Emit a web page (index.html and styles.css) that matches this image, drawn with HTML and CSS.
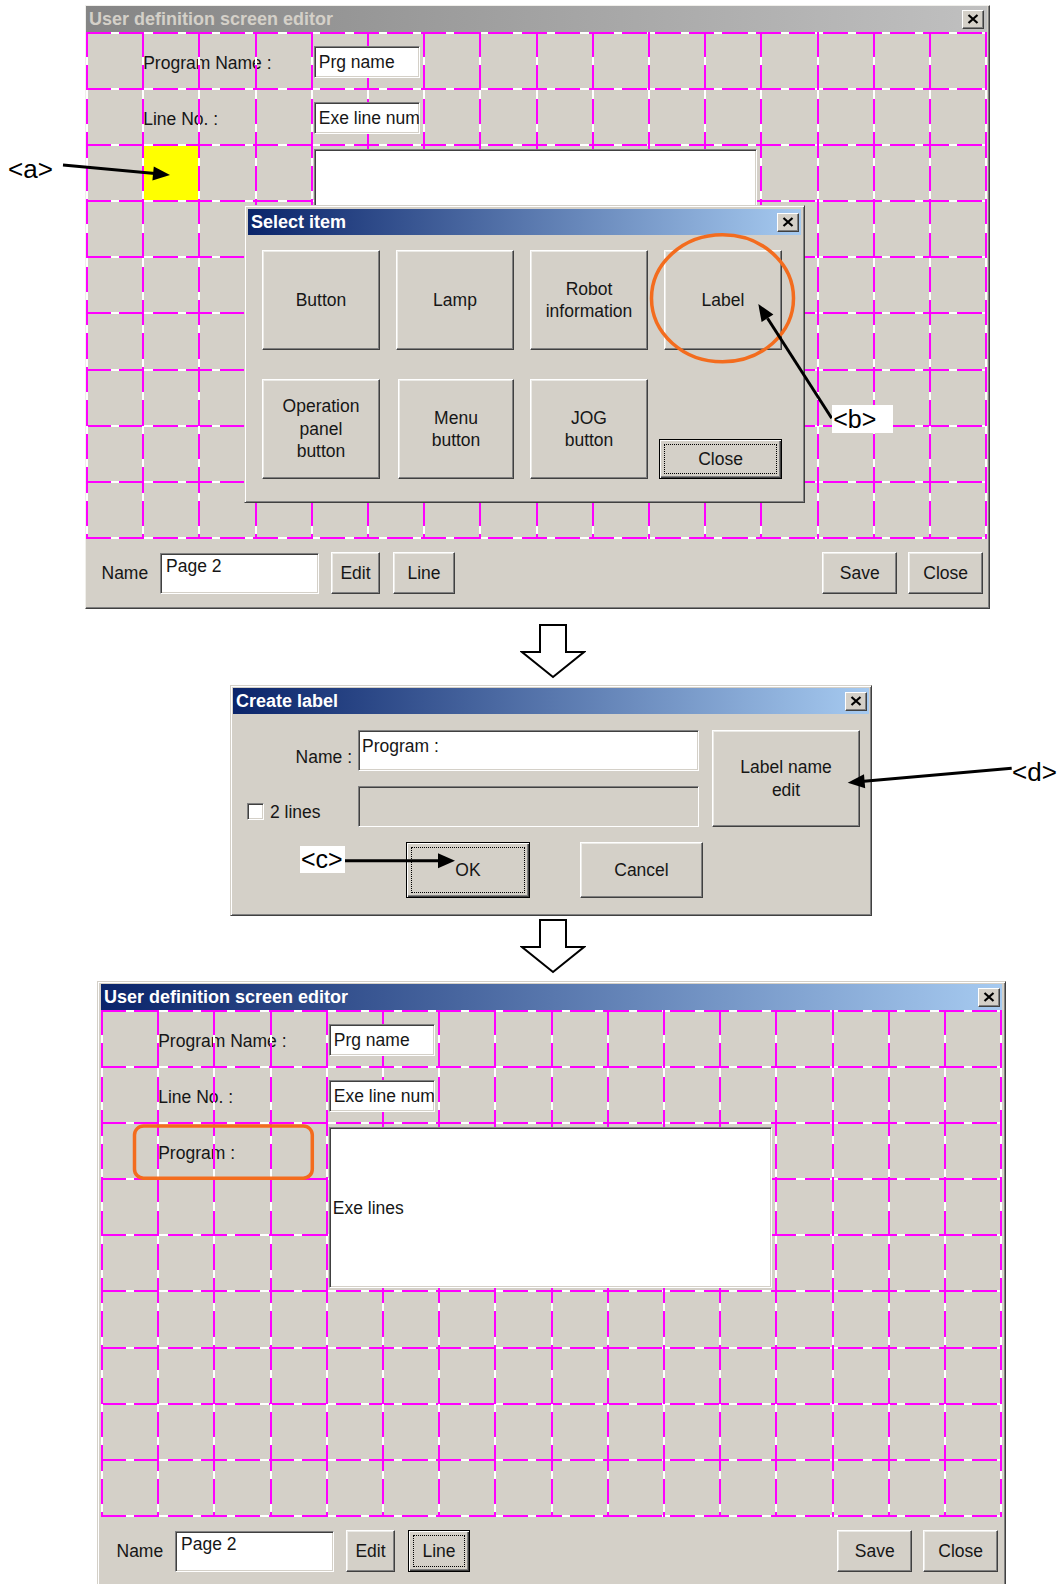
FILE: index.html
```html
<!DOCTYPE html>
<html lang="en">
<head>
<meta charset="utf-8">
<title>User definition screen editor</title>
<link rel="stylesheet" href="styles.css">
</head>
<body>

<div class="win win-top">
  <div class="titlebar inactive">
    <span class="title-text">User definition screen editor</span>
    <span class="tb-close"><svg width="12" height="10" viewBox="0 0 12 10"><path d="M1.5 1L10.5 9M10.5 1L1.5 9" stroke="#000" stroke-width="2.2"/></svg></span>
  </div>
  <div class="canvas">
    <div class="c-lbl r1">Program Name :</div>
    <div class="c-field sunken r1">Prg name</div>
    <div class="c-lbl r2">Line No. :</div>
    <div class="c-field sunken r2">Exe line num</div>
    <div class="c-yellow"></div>
    <div class="c-memo sunken"></div>
  </div>
  <div class="bar">
    <span class="bar-lbl">Name</span>
    <div class="bar-field sunken">Page 2</div>
    <button class="btn b-edit">Edit</button>
    <button class="btn b-line">Line</button>
    <button class="btn b-save">Save</button>
    <button class="btn b-close">Close</button>
  </div>

  <div class="dlg dlg-select">
    <div class="titlebar active">
      <span class="title-text">Select item</span>
      <span class="tb-close"><svg width="12" height="10" viewBox="0 0 12 10"><path d="M1.5 1L10.5 9M10.5 1L1.5 9" stroke="#000" stroke-width="2.2"/></svg></span>
    </div>
    <div class="sel-grid">
      <button class="btn">Button</button>
      <button class="btn">Lamp</button>
      <button class="btn">Robot<br>information</button>
      <button class="btn">Label</button>
      <button class="btn">Operation<br>panel<br>button</button>
      <button class="btn sel-menu">Menu<br>button</button>
      <button class="btn">JOG<br>button</button>
      <button class="btn default sel-close">Close</button>
    </div>
  </div>
</div>

<svg class="down-arrow" width="66" height="56" viewBox="0 0 66 56"><polygon points="20,1 46,1 46,28 64,28 33,53 2,28 20,28" fill="#fff" stroke="#000" stroke-width="2"/></svg>

<div class="dlg dlg-create">
  <div class="titlebar active">
    <span class="title-text">Create label</span>
    <span class="tb-close"><svg width="12" height="10" viewBox="0 0 12 10"><path d="M1.5 1L10.5 9M10.5 1L1.5 9" stroke="#000" stroke-width="2.2"/></svg></span>
  </div>
  <div class="cl-body">
    <div class="cl-name-lbl">Name :</div>
    <div class="cl-name sunken">Program :</div>
    <button class="btn cl-edit">Label name<br>edit</button>
    <div class="cl-check"><span class="checkbox sunken"></span><span>2 lines</span></div>
    <div class="cl-second sunken"></div>
    <div class="cl-actions">
      <button class="btn default cl-ok">OK</button>
      <button class="btn cl-cancel">Cancel</button>
    </div>
  </div>
</div>

<svg class="down-arrow" width="66" height="56" viewBox="0 0 66 56"><polygon points="20,1 46,1 46,28 64,28 33,53 2,28 20,28" fill="#fff" stroke="#000" stroke-width="2"/></svg>

<div class="win win-bottom">
  <div class="titlebar active">
    <span class="title-text">User definition screen editor</span>
    <span class="tb-close"><svg width="12" height="10" viewBox="0 0 12 10"><path d="M1.5 1L10.5 9M10.5 1L1.5 9" stroke="#000" stroke-width="2.2"/></svg></span>
  </div>
  <div class="canvas">
    <div class="c-lbl r1">Program Name :</div>
    <div class="c-field sunken r1">Prg name</div>
    <div class="c-lbl r2">Line No. :</div>
    <div class="c-field sunken r2">Exe line num</div>
    <div class="c-lbl r3">Program :</div>
    <div class="c-memo sunken">Exe lines</div>
  </div>
  <div class="bar">
    <span class="bar-lbl">Name</span>
    <div class="bar-field sunken">Page 2</div>
    <button class="btn b-edit">Edit</button>
    <button class="btn default b-line">Line</button>
    <button class="btn b-save">Save</button>
    <button class="btn b-close">Close</button>
  </div>
</div>

<svg class="overlay" width="1061" height="1584" viewBox="0 0 1061 1584">
  <ellipse cx="722.5" cy="298.3" rx="71" ry="63.5" fill="none" stroke="#f36c1e" stroke-width="3.5"/>
  <rect x="134.5" y="1126" width="177.8" height="52.2" rx="9" fill="none" stroke="#f36c1e" stroke-width="3.5"/>
  <g stroke="#000" stroke-width="3" fill="none">
    <line x1="63" y1="165" x2="155" y2="173.6"/>
    <line x1="831.7" y1="418.3" x2="767.5" y2="318.3"/>
    <line x1="345" y1="860.7" x2="440" y2="860.7"/>
    <line x1="1011.7" y1="768.3" x2="864" y2="781.2"/>
  </g>
  <g fill="#000">
    <polygon points="170,175 152.4,180.4 153.8,166.4"/>
    <polygon points="758.3,304 773.4,314.5 761.6,322.1"/>
    <polygon points="455,860.7 438,853.2 438,868.2"/>
    <polygon points="847.7,782.7 864,774.2 865.2,788.2"/>
  </g>
</svg>
<span class="tag tag-a">&lt;a&gt;</span>
<span class="tag tag-b">&lt;b&gt;</span>
<span class="tag tag-c">&lt;c&gt;</span>
<span class="tag tag-d">&lt;d&gt;</span>

</body>
</html>
```

FILE: styles.css
```css
html, body {
  margin: 0;
  padding: 0;
}

body {
  width: 1061px;
  height: 1584px;
  overflow: hidden;
  position: relative;
  background: #fff;
  font-family: "Liberation Sans", Arial, sans-serif;
  font-size: 17.5px;
  line-height: 22.5px;
  color: #161616;
}

/* ---------- buttons (base) ---------- */
.btn {
  box-sizing: border-box;
  margin: 0;
  padding: 0;
  background: #d4d0c8;
  border: 1px solid;
  border-color: #fff #404040 #404040 #fff;
  box-shadow: inset -1px -1px #808080, inset 1px 1px #ecebe7;
  font: inherit;
  color: #161616;
  text-align: center;
  white-space: nowrap;
  display: flex;
  align-items: center;
  justify-content: center;
}

.btn.default {
  position: relative;
  border-color: #000;
  box-shadow: inset 1px 1px #fff, inset -1px -1px #404040, inset -2px -2px #808080;
}

.btn.default::after {
  content: "";
  position: absolute;
  inset: 4px;
  border: 1px dotted #000;
}

.sunken {
  box-sizing: border-box;
  background: #fff;
  border: 1px solid;
  border-color: #808080 #fff #fff #808080;
  box-shadow: inset 1px 1px #404040, inset -1px -1px #d4d0c8;
}

/* ---------- windows ---------- */
.win {
  position: relative;
  background: #d4d0c8;
  border: 1px solid;
  width: 901.2px;
}

.win-top {
  margin: 5px 0 0 85px;
  border-color: #f0efeb #404040 #404040 #f0efeb;
  padding: 0 2px 1px 0;
  box-shadow: inset -1px -1px #808080;
}

.win-bottom {
  margin: 6px 0 0 97px;
  border-color: #d4d0c8 #404040 #404040 #d4d0c8;
  padding: 2px 3px 3px 3px;
  box-shadow: inset 1px 1px #fff, inset -1px -1px #808080;
}

.titlebar {
  height: 26px;
  display: flex;
  align-items: center;
  justify-content: space-between;
  padding: 0 2px 0 3px;
  font-weight: bold;
  font-size: 18px;
  color: #fff;
  white-space: nowrap;
}

.titlebar.active {
  background: linear-gradient(to right, #0a246a, #a6caf0);
}

.titlebar.inactive {
  background: linear-gradient(to right, #858585, #c0c0c0);
  color: #d4d0c8;
  padding-right: 3px;
}

.tb-close {
  width: 22px;
  height: 19px;
  box-sizing: border-box;
  background: #d4d0c8;
  border: 1px solid;
  border-color: #fff #404040 #404040 #fff;
  box-shadow: inset -1px -1px #808080;
  display: flex;
  align-items: center;
  justify-content: center;
}

.tb-close svg {
  display: block;
}

/* ---------- editing canvas with dashed grid ---------- */
.canvas {
  position: relative;
  width: 901.2px;
  height: 507px;
  display: grid;
  grid-template-columns: repeat(16, 56.2px);
  grid-template-rows: repeat(9, 56.1px);
}

.canvas::before,
.canvas::after {
  content: "";
  position: absolute;
  inset: 0;
  pointer-events: none;
}

.canvas::before {
  background: repeating-linear-gradient(to right, #ff00ff 0 25px, #ffffff 25px 33.5px);
  -webkit-mask-image: repeating-linear-gradient(to bottom, #000 0 2px, transparent 2px 56.1px);
  mask-image: repeating-linear-gradient(to bottom, #000 0 2px, transparent 2px 56.1px);
}

.canvas::after {
  background: repeating-linear-gradient(to bottom, #ff00ff 0 25px, #ffffff 25px 33.5px);
  -webkit-mask-image: repeating-linear-gradient(to right, #000 0 2px, transparent 2px 56.2px);
  mask-image: repeating-linear-gradient(to right, #000 0 2px, transparent 2px 56.2px);
}

.r1 { grid-row: 1; }
.r2 { grid-row: 2; }
.r3 { grid-row: 3; }

.c-lbl {
  grid-column: 2 / 5;
  align-self: start;
  margin-top: 20px;
  padding-left: 1px;
  white-space: nowrap;
}

.c-field {
  grid-column: 5 / 7;
  align-self: start;
  justify-self: start;
  margin: 14px 0 0 3px;
  width: 106px;
  height: 32px;
  padding-left: 4px;
  line-height: 30px;
  overflow: hidden;
  white-space: nowrap;
  position: relative;
  z-index: 1;
}

.c-memo {
  grid-column: 5 / 13;
  grid-row: 3 / 6;
  margin: 5px 3px 2px 3px;
  padding-left: 3px;
  display: flex;
  align-items: center;
  position: relative;
  z-index: 1;
}

.c-yellow {
  grid-column: 2;
  grid-row: 3;
  background: #ffff00;
}

/* ---------- bottom bar ---------- */
.bar {
  display: flex;
  align-items: center;
  padding: 13px 4px 13px 15.5px;
}

.bar-lbl {
  width: 58.5px;
}

.bar-field {
  width: 159px;
  height: 41px;
  padding: 1px 0 0 5px;
}

.bar .btn {
  height: 42px;
}

.bar .b-edit { width: 49px; margin-left: 12px; }
.bar .b-line { width: 62px; margin-left: 13px; }
.bar .b-save { width: 75px; margin-left: auto; }
.bar .b-close { width: 75px; margin-left: 11px; }

/* ---------- dialogs ---------- */
.dlg {
  background: #d4d0c8;
  border: 1px solid;
  border-color: #d4d0c8 #404040 #404040 #d4d0c8;
  box-shadow: inset 1px 1px #fff, inset -1px -1px #808080;
}

.dlg-select {
  position: absolute;
  left: 158px;
  top: 199px;
  width: 553px;
  padding: 3px;
  z-index: 5;
}

.sel-grid {
  display: grid;
  grid-template-columns: repeat(4, 118px);
  grid-template-rows: 100px 100px;
  column-gap: 16px;
  row-gap: 29px;
  padding: 15px 0 20px 14px;
}

.sel-grid .sel-menu {
  margin-left: 2px;
}

.sel-close {
  justify-self: end;
  align-self: end;
  width: 123px;
  height: 40px;
}

.dlg-create {
  margin: 5px 0 0 230px;
  width: 636px;
  padding: 2px;
}

.cl-body {
  display: grid;
  grid-template-columns: 119px 6px 341px 13px 148px;
  grid-template-rows: 41px 41px 56px;
  row-gap: 15px;
  padding: 16px 0 15px 0;
}

.cl-name-lbl {
  grid-column: 1;
  grid-row: 1;
  justify-self: end;
  align-self: end;
  margin-bottom: 3px;
}

.cl-name {
  grid-column: 3;
  grid-row: 1;
  padding: 4px 0 0 3px;
}

.cl-edit {
  grid-column: 5;
  grid-row: 1 / 3;
}

.cl-check {
  grid-column: 1;
  grid-row: 2;
  align-self: end;
  margin-bottom: 4px;
  padding-left: 14px;
  display: flex;
  align-items: center;
  gap: 6px;
}

.checkbox {
  width: 17px;
  height: 17px;
  display: block;
}

.cl-second {
  grid-column: 3;
  grid-row: 2;
  background: #d4d0c8;
}

.cl-actions {
  grid-column: 1 / -1;
  grid-row: 3;
  display: flex;
  padding-left: 173px;
}

.cl-actions .cl-ok { width: 124px; }
.cl-actions .cl-cancel { width: 123px; margin-left: 50px; }

/* ---------- transition arrows ---------- */
.down-arrow {
  display: block;
  margin-left: 520px;
}

.win-top + .down-arrow {
  margin-top: 15px;
}

.dlg-create + .down-arrow {
  margin-top: 3px;
}

/* ---------- annotations ---------- */
.overlay {
  position: absolute;
  left: 0;
  top: 0;
  pointer-events: none;
  z-index: 10;
}

.tag {
  position: absolute;
  z-index: 11;
  font-family: "Liberation Sans", Arial, sans-serif;
  font-size: 25px;
  line-height: 28px;
  color: #000;
  background: #fff;
  white-space: nowrap;
}

.tag-a { left: 8px; top: 155px; background: transparent; font-size: 26px; }
.tag-b { left: 831.7px; top: 405px; width: 60px; padding-left: 1.5px; }
.tag-c { left: 300px; top: 846px; width: 44px; padding-left: 1px; height: 27px; line-height: 27px; }
.tag-d { left: 1012px; top: 757.7px; background: transparent; font-size: 26px; }
```
